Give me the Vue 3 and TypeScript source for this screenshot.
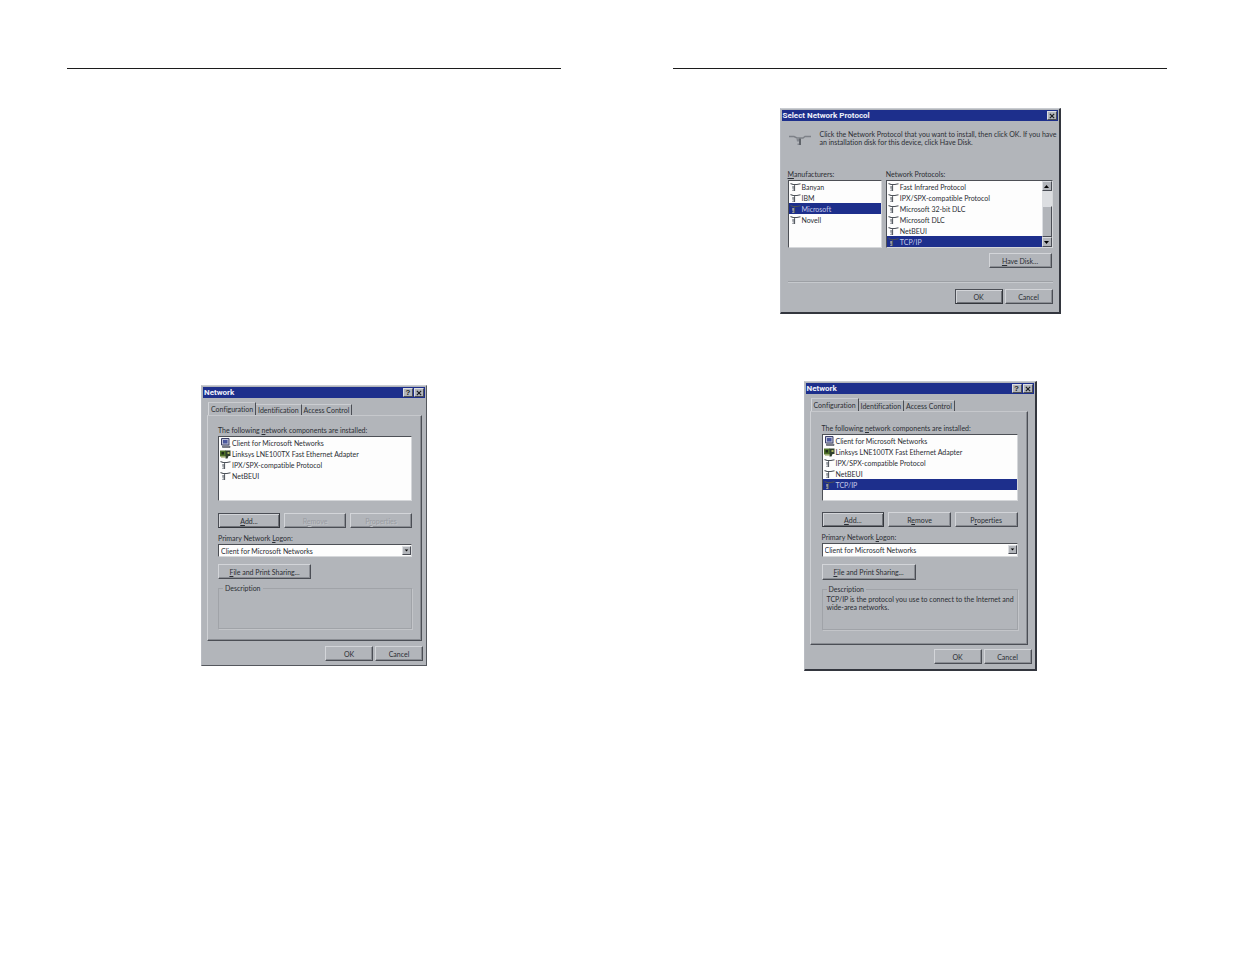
<script setup lang="ts">
interface Component {
  icon: 'client' | 'adapter' | 'protocol'
  name: string
}
interface Part {
  before: string
  key: string
  after: string
}
interface NetworkDialog {
  id: string
  page: string
  items: Component[]
  selected: number
  enabled: boolean
  description: string
}

const base: Component[] = [
  { icon: 'client', name: 'Client for Microsoft Networks' },
  { icon: 'adapter', name: 'Linksys LNE100TX Fast Ethernet Adapter' },
  { icon: 'protocol', name: 'IPX/SPX-compatible Protocol' },
  { icon: 'protocol', name: 'NetBEUI' },
]

const dialogs: NetworkDialog[] = [
  { id: 'before', page: 'left', items: base, selected: -1, enabled: false, description: '' },
  {
    id: 'after',
    page: 'right',
    items: [...base, { icon: 'protocol', name: 'TCP/IP' }],
    selected: 4,
    enabled: true,
    description:
      'TCP/IP is the protocol you use to connect to the Internet and wide-area networks.',
  },
]

const tabs = ['Configuration', 'Identification', 'Access Control']
const actions: Part[] = [
  { before: '', key: 'A', after: 'dd...' },
  { before: 'R', key: 'e', after: 'move' },
  { before: 'P', key: 'r', after: 'operties' },
]
const manufacturers = ['Banyan', 'IBM', 'Microsoft', 'Novell']
const protocols = [
  'Fast Infrared Protocol',
  'IPX/SPX-compatible Protocol',
  'Microsoft 32-bit DLC',
  'Microsoft DLC',
  'NetBEUI',
  'TCP/IP',
]
</script>

<template>
  <svg class="defs" aria-hidden="true">
    <symbol id="protocol" viewBox="0 0 11 10">
      <path d="M0.5 1.5L3 2.5H7L10.5 1.8" fill="none" stroke="#4c5158" stroke-width="1.1" />
      <path d="M2.2 4H5V9H2.2V7.8H3.4V6.8H2.2Z" fill="#979ba1" />
      <path d="M4.6 3V9" stroke="#4a4f56" stroke-width="0.9" />
    </symbol>
    <symbol id="client" viewBox="0 0 11 10">
      <path d="M1.5 0.5H9V7H1.5Z" fill="#c0c4da" stroke="#3c4068" stroke-width="1" />
      <path d="M3 2H7.5V5.5H3Z" fill="#4a569c" />
      <path d="M2.5 8H10V9.5H2.5Z" fill="#8d909c" stroke="#474a58" stroke-width="0.6" />
    </symbol>
    <symbol id="adapter" viewBox="0 0 11 10">
      <path d="M0 1.5H6V7.5H0Z" fill="#4d7026" />
      <path d="M1.5 3H4V5.5H1.5Z" fill="#1e2a18" />
      <path d="M5.5 1.5H10.5V7H8.5L7.5 9.5H5.5Z" fill="#30402c" />
      <path d="M7.5 3H9.5V5H7.5Z" fill="#a9b45c" />
      <path d="M1 8H5.5" stroke="#8d9c4a" stroke-width="1" />
    </symbol>
  </svg>
  <main class="spread">
    <section v-for="side in ['left', 'right']" :key="side" class="sheet" :class="side">
      <hr />

      <form v-if="side === 'right'" class="dialog chooser" @submit.prevent>
        <header class="title">
          <span>Select Network Protocol</span>
          <button type="button" class="cap" aria-label="Close">
            <svg viewBox="0 0 7 7"><path d="M1 1L6 6M6 1L1 6" /></svg>
          </button>
        </header>
        <div class="intro">
          <svg viewBox="0 0 22 16">
            <path d="M0 5.5H5L8 7H14L16 5.5H22" fill="none" stroke="#7d8188" stroke-width="1.4" />
            <path d="M7.5 8H12V14H8.5V12.5H10V10.5H8Z" fill="#84888f" />
            <path d="M11 7.5V14" stroke="#3d4147" />
          </svg>
          <p>Click the Network Protocol that you want to install, then click OK. If you have an installation disk for this device, click Have Disk.</p>
        </div>
        <div class="pair">
          <div class="makers">
            <span id="makers" class="label"><u>M</u>anufacturers:</span>
            <ul class="list" role="listbox" aria-labelledby="makers">
              <li v-for="name in manufacturers" :key="name" role="option" :aria-selected="name === 'Microsoft'">
                <svg viewBox="0 0 11 10"><use href="#protocol" /></svg><span>{{ name }}</span>
              </li>
            </ul>
          </div>
          <div class="protos">
            <span id="protos" class="label">Network Protocols:</span>
            <div class="list scrolled">
              <ul role="listbox" aria-labelledby="protos">
                <li v-for="name in protocols" :key="name" role="option" :aria-selected="name === 'TCP/IP'">
                  <svg viewBox="0 0 11 10"><use href="#protocol" /></svg><span>{{ name }}</span>
                </li>
              </ul>
              <div class="bar">
                <button type="button" class="arrow" aria-label="Scroll up">
                  <svg viewBox="0 0 7 7"><path d="M1 5L3.5 2L6 5Z" /></svg>
                </button>
                <span class="track"></span>
                <span class="thumb"></span>
                <button type="button" class="arrow" aria-label="Scroll down">
                  <svg viewBox="0 0 7 7"><path d="M1 2L3.5 5L6 2Z" /></svg>
                </button>
              </div>
            </div>
          </div>
        </div>
        <div class="disk"><button type="button" class="btn"><u>H</u>ave Disk...</button></div>
        <div class="split"></div>
        <footer>
          <button type="submit" class="btn default">OK</button>
          <button type="button" class="btn">Cancel</button>
        </footer>
      </form>

      <form
        v-for="d in dialogs.filter((x) => x.page === side)"
        :key="d.id"
        class="dialog network"
        @submit.prevent
      >
        <header class="title">
          <span>Network</span>
          <button type="button" class="cap" aria-label="Help">?</button>
          <button type="button" class="cap" aria-label="Close">
            <svg viewBox="0 0 7 7"><path d="M1 1L6 6M6 1L1 6" /></svg>
          </button>
        </header>
        <div class="tabs" role="tablist">
          <button v-for="(t, i) in tabs" :key="t" type="button" role="tab" :aria-selected="i === 0">{{ t }}</button>
        </div>
        <div class="panel">
          <span :id="d.id + '-list'" class="label">The following <u>n</u>etwork components are installed:</span>
          <ul class="list" role="listbox" :aria-labelledby="d.id + '-list'">
            <li v-for="(c, i) in d.items" :key="c.name" role="option" :aria-selected="i === d.selected">
              <svg viewBox="0 0 11 10"><use :href="'#' + c.icon" /></svg><span>{{ c.name }}</span>
            </li>
          </ul>
          <div class="actions">
            <button
              v-for="(a, i) in actions"
              :key="a.key"
              type="button"
              class="btn"
              :class="{ default: i === 0 }"
              :disabled="i > 0 && !d.enabled"
            >{{ a.before }}<u>{{ a.key }}</u>{{ a.after }}</button>
          </div>
          <label class="label" :for="d.id + '-logon'">Primary Network <u>L</u>ogon:</label>
          <div class="combo">
            <select :id="d.id + '-logon'"><option>Client for Microsoft Networks</option></select>
            <svg viewBox="0 0 7 7"><path d="M1 2L3.5 5L6 2Z" /></svg>
          </div>
          <button type="button" class="btn sharing"><u>F</u>ile and Print Sharing...</button>
          <fieldset>
            <legend>Description</legend>
            <p>{{ d.description }}</p>
          </fieldset>
        </div>
        <footer>
          <button type="submit" class="btn">OK</button>
          <button type="button" class="btn">Cancel</button>
        </footer>
      </form>
    </section>
  </main>
</template>

<style>
body {
  margin: 0;
  background: #fff;
}
</style>

<style scoped>
* {
  box-sizing: border-box;
}
.defs {
  position: absolute;
  width: 0;
  height: 0;
}
.spread {
  display: grid;
  grid-template-columns: 1fr 1fr;
  gap: 112px;
  padding: 68px 68px 68px 67px;
  color: #2b2e34;
  font: 7px/8px Lato, 'Liberation Sans', sans-serif;
  font-variant-ligatures: none;
}
.sheet {
  display: flex;
  flex-direction: column;
  align-items: center;
}
hr {
  width: 100%;
  margin: 0;
  border: 0;
  border-top: 1px solid #1c1c1c;
}
button,
select {
  margin: 0;
  padding: 0;
  color: inherit;
  font: inherit;
  font-variant-ligatures: none;
}
p,
ul {
  margin: 0;
  padding: 0;
  list-style: none;
}
.dialog {
  width: 100%;
  padding: 1px;
  background: #b2b5ba;
  border: 1px solid;
  border-color: #c9ccd1 #54575d #54575d #b9bcc2;
}
.right .dialog {
  border-right: 2px solid #33363e;
  border-bottom: 2px solid #33363e;
}
.left .network {
  max-width: 226px;
  margin-top: 316px;
}
.chooser {
  max-width: 281px;
  margin-top: 39px;
}
.right .network {
  max-width: 233px;
  margin-top: 67px;
}
.title {
  display: flex;
  align-items: center;
  gap: 1px;
  height: 11px;
  padding: 0 1px;
  background: #1d2f8c;
  color: #eef0fa;
  font: bold 8px/10px Roboto, 'Liberation Sans', sans-serif;
}
.title span {
  flex: 1;
}
.cap {
  display: flex;
  align-items: center;
  justify-content: center;
  width: 10px;
  height: 9px;
  background: #b2b5ba;
  border: 1px solid;
  border-color: #dcdee2 #4a4d55 #4a4d55 #dcdee2;
  color: #1c1e24;
  font: bold 8px/8px 'Liberation Sans', sans-serif;
}
.cap svg {
  width: 6px;
  height: 6px;
  stroke: #1c1e24;
  stroke-width: 1.4;
}
.label {
  display: block;
  margin-bottom: 2px;
}
.list {
  background: #fdfdfd;
  border: 1px solid;
  border-color: #4d5056 #d5d7da #d5d7da #4d5056;
}
.list li {
  display: flex;
  align-items: center;
  gap: 1px;
  height: 11px;
  padding-left: 1px;
  white-space: nowrap;
}
.list svg {
  flex: none;
  width: 11px;
  height: 10px;
}
.list li[aria-selected='true'] {
  background: #1d2f8c;
  color: #c5cbea;
}
.btn {
  height: 15px;
  background: #b2b5ba;
  border: 1px solid;
  border-color: #d3d5d9 #4b4e55 #4b4e55 #d3d5d9;
  box-shadow: inset -1px -1px #8a8d93;
}
.btn.default {
  border-color: #4b4e55 #33363c #33363c #4b4e55;
  box-shadow: inset 1px 1px #d3d5d9, inset -1px -1px #6e7177;
}
.btn:disabled {
  color: #999ca2;
  text-shadow: 1px 1px #c0c2c6;
}
footer {
  display: flex;
  justify-content: flex-end;
  gap: 2px;
}
footer .btn {
  width: 48px;
}
.tabs {
  display: flex;
  align-items: flex-end;
  padding: 4px 0 0 5px;
}
.tabs button {
  height: 11px;
  padding: 0 2px;
  background: transparent;
  border: 0;
  border-top: 1px solid #cbcdd1;
  border-right: 1px solid #4b4e55;
}
.tabs button[aria-selected='true'] {
  height: 13px;
  border-left: 1px solid #d3d5d9;
}
.panel {
  display: flex;
  flex-direction: column;
  margin: 0 3px 0 4px;
  padding: 10px 9px 11px 10px;
  border: 1px solid;
  border-color: #c6c8cc #4b4e55 #4b4e55 #cfd1d5;
  box-shadow: inset -1px -1px #8a8d93;
}
.network .list {
  height: 65px;
}
.actions {
  display: grid;
  grid-template-columns: 1fr 1fr 1fr;
  gap: 4px;
  margin: 12px 0 6px;
}
.combo {
  position: relative;
}
.combo select {
  display: block;
  width: 100%;
  height: 13px;
  padding: 0 2px;
  appearance: none;
  background: #fdfdfd;
  border: 1px solid;
  border-color: #4d5056 #d5d7da #d5d7da #4d5056;
  border-radius: 0;
}
.combo svg {
  position: absolute;
  top: 2px;
  right: 1px;
  width: 9px;
  height: 9px;
  padding: 1px;
  background: #b2b5ba;
  border: 1px solid;
  border-color: #dcdee2 #4a4d55 #4a4d55 #dcdee2;
  pointer-events: none;
}
.sharing {
  width: 48%;
  margin: 7px 0 5px;
}
fieldset {
  min-width: 0;
  height: 45px;
  margin: 0;
  padding: 2px 0 2px 4px;
  border: 1px solid #a0a3a8;
  box-shadow: 1px 1px #c3c5c9;
}
legend {
  padding: 0 2px;
}
.network footer {
  padding: 5px 2px 3px;
}
.right .network .panel {
  padding: 12px 9px 14px 11px;
  margin: 0 6px 0 4px;
}
.right .network .list {
  height: 67px;
}
.right .network .actions {
  margin-top: 11px;
}
.right .network footer {
  padding: 4px 2px 4px;
}
.right .combo select {
  height: 14px;
}
.right .sharing {
  height: 16px;
}
.intro {
  display: flex;
  gap: 9px;
  padding: 9px 0 0 7px;
}
.intro svg {
  flex: none;
  width: 22px;
  height: 16px;
  margin-top: 1px;
}
.intro p {
  flex: 1;
}
.pair {
  display: flex;
  gap: 4px;
  padding: 23px 5px 0 6px;
}
.makers {
  flex: 94;
}
.protos {
  flex: 166;
}
.pair .list {
  height: 68px;
}
.scrolled {
  display: flex;
}
.scrolled ul {
  flex: 1;
}
.bar {
  display: flex;
  flex-direction: column;
  width: 10px;
}
.track {
  flex: 16;
  background: #dcdee1;
}
.thumb {
  flex: 30;
  background: #b2b5ba;
  border: 1px solid;
  border-color: #dcdee2 #4a4d55 #4a4d55 #dcdee2;
}
.arrow {
  display: flex;
  align-items: center;
  justify-content: center;
  height: 10px;
  background: #b2b5ba;
  border: 1px solid;
  border-color: #dcdee2 #4a4d55 #4a4d55 #dcdee2;
}
.bar svg {
  flex: none;
  width: 7px;
  height: 7px;
}
.disk {
  display: flex;
  justify-content: flex-end;
  padding: 5px 6px 0;
}
.disk .btn {
  width: 63px;
}
.split {
  margin: 13px 5px 6px 6px;
  border-top: 1px solid #9da0a5;
  border-bottom: 1px solid #c6c9cd;
}
.chooser footer {
  padding: 0 5px 7px;
}
</style>
